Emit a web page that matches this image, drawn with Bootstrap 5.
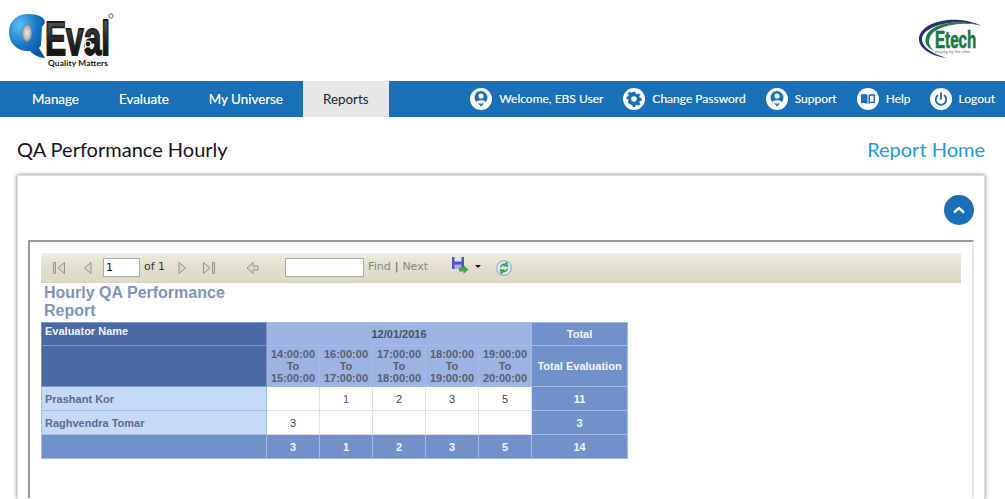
<!DOCTYPE html>
<html lang="en">
<head>
<meta charset="utf-8">
<title>QA Performance Hourly</title>
<link href="https://cdn.jsdelivr.net/npm/bootstrap@5.3.0/dist/css/bootstrap.min.css" rel="stylesheet">
<style>
html,body{height:499px;overflow:hidden;background:#fff}
body{font-family:Lato,"Liberation Sans",sans-serif;color:#111}
.brand-row{height:81px}
.qlogo{display:block;width:125px;height:81px}
.etech{display:block;width:90px;height:81px}
.main-bar{height:36px;background:#1a6fb9;padding:0 10px 0 12px}
.tab-link{display:block;height:36px;line-height:36px;padding:0 20px;color:#eef4fa;font-size:13.4px;text-shadow:0 0 .6px #eef4fa;text-decoration:none}
.tab-link.current{background:#e7e7e7;color:#1b1b3a;text-shadow:none}
.util-link{display:flex;align-items:center;gap:7px;margin-left:20px;color:#e6eff8;font-size:12px;text-shadow:0 0 .6px #e6eff8;text-decoration:none;white-space:nowrap}
.util-link svg{display:block;width:22px;height:22px;flex:none}
.util-link.tight{margin-left:19px}
.page-head{height:58px;padding:0 20px 0 17px}
.page-title{font-size:20px;font-weight:400;color:#15151f;margin:0;position:relative;top:3px}
.home-link{font-size:20px;color:#1c9be0;text-decoration:none;position:relative;top:3px}
.outer-panel{margin:0 20px 0 17px;height:324px;background:#fff;border:1px solid #ddd;border-bottom:0;box-shadow:0 0 4px rgba(0,0,0,.55);padding:19px 10px 0 10px}
.round-up{width:30px;height:30px;padding:0;border:0;border-radius:50%;background:#1a6fb9;display:flex;align-items:center;justify-content:center}
.round-up svg{width:14px;height:10px;display:block}
.viewer{margin-top:15px;height:258px;border-top:2px solid #999;border-left:2px solid #999;border-right:2px solid #e8e8e8;padding:11px 11px 0 11px}
.tool-strip{height:30px;background:linear-gradient(#f0ede0 0,#e5e1d1 40%,#e0dccb 70%,#ddd9c7 100%);border-bottom:1px solid #d8d4c2;font-family:"DejaVu Sans",sans-serif;font-size:11px;color:#333;padding-left:11px}
.tool-strip svg{display:block;flex:none}
.pg-input{width:37px;height:19px;border:1px solid #aaa;background:#fff;font-size:11px;line-height:17px;padding:0 2px;color:#111}
.find-input{width:79px;height:19px;border:1px solid #aaa;background:#fff}
.find-txt{color:#7c8b8b}
.find-sep{color:#51615c;margin:0 4px}
.rep-title{width:215px;margin:1px 0 2px 3px;font-family:"Liberation Sans",sans-serif;font-size:16px;line-height:18px;font-weight:700;color:#7f93c0}
.rep-grid{table-layout:fixed;width:586px;border-collapse:collapse;font-family:"Liberation Sans",sans-serif;font-size:11px;line-height:12px;font-weight:700}
.rep-grid td{border:1px solid #a4bce4;text-align:center;padding:0;vertical-align:middle;height:24px}
.rep-grid tr.top-row td{height:23px}
.c-name{width:225px}.c-hr{width:53px}.c-tot{width:96px}
.rep-grid td.evalh{background:#4a68a2;color:#f2f5fb;text-align:left;vertical-align:top;padding:2px 3px;border-color:#7a97cf}
.rep-grid td.dateh{background:#9db4e2;color:#4a5160}
.rep-grid td.hrh{background:#9db4e2;color:#59606e;height:41px}
.rep-grid td.toth{background:#7091c9;color:#f5f7fb}
.rep-grid td.pname{background:#c6d9f6;color:#5b6a97;text-align:left;padding-left:3px}
.rep-grid td.val{background:#fff;color:#444;font-weight:400;border-color:#e2e2e2}
.rep-grid td.val.link{color:#7a3a8a}
</style>
</head>
<body>
<header class="brand-row d-flex justify-content-between">
  <svg class="qlogo" viewBox="0 0 125 81" role="img" aria-label="Q-Eval logo">
    <defs>
      <radialGradient id="blueg" cx="30%" cy="25%" r="85%"><stop offset="0" stop-color="#5cc0f4"/><stop offset=".55" stop-color="#1577c9"/><stop offset="1" stop-color="#0b4f9e"/></radialGradient>
      <linearGradient id="blk" x1="0" y1="0" x2="0" y2="1"><stop offset="0" stop-color="#666"/><stop offset=".5" stop-color="#2a2a2a"/><stop offset="1" stop-color="#000"/></linearGradient>
      <radialGradient id="holeg" cx="50%" cy="50%" r="55%"><stop offset="0" stop-color="#e8e8e8"/><stop offset=".6" stop-color="#bdbdbd"/><stop offset="1" stop-color="#5a6f80"/></radialGradient>
    </defs>
    <path d="M28 14c10 0 17 3 17 9l-3 4-1 18-2 3 6 10c-6 0-11-3-15-7C18 52 9 44 9 32c0-11 8-18 19-18z" fill="url(#blueg)"/>
    <ellipse cx="27" cy="33" rx="5" ry="9" fill="url(#holeg)"/>
    <text transform="translate(45 55) scale(.66 1)" font-family="'Liberation Sans',sans-serif" font-weight="700" font-size="48" fill="url(#blk)" stroke="#1c1c1c" stroke-width="1.800">Eval</text>
    <circle cx="88" cy="44" r="3" fill="none" stroke="#fff" stroke-width="1.200"/><path d="M86 46.500l-4.500 5" stroke="#fff" stroke-width="1.600"/>
    <circle cx="111" cy="16" r="2.200" fill="none" stroke="#555" stroke-width=".9"/>
    <text x="48" y="66" font-family="Lato,sans-serif" font-weight="700" font-size="8.300" fill="#111" textLength="60">Quality Matters</text>
  </svg>
  <svg class="etech" viewBox="915 0 90 81" role="img" aria-label="Etech logo">
    <path d="M982 26C958 14 922 20 919 38c-1 10 12 18 28 20C933 54 921 47 922 38 925 24 958 18 982 26z" fill="#2a2f73"/>
    <path d="M980 25C958 19 930 23 926 37c-2 7 2 11 8 14C929 46 928 42 930 37 934 27 958 21 980 25z" fill="#1e7d45"/>
    <text transform="translate(935 48) scale(.66 1)" font-family="'Liberation Sans',sans-serif" font-weight="700" font-size="23" fill="#167a3e" stroke="#167a3e" stroke-width=".7">Etech</text>
    <text x="935" y="53" font-family="'Liberation Sans',sans-serif" font-size="3.600" fill="#555" textLength="35">playing by the rules</text>
  </svg>
</header>

<nav class="main-bar d-flex justify-content-between align-items-center">
  <div class="d-flex">
    <a class="tab-link" href="#">Manage</a>
    <a class="tab-link" href="#">Evaluate</a>
    <a class="tab-link" href="#">My Universe</a>
    <a class="tab-link current" href="#">Reports</a>
  </div>
  <div class="d-flex">
    <a class="util-link" href="#"><svg viewBox="0 0 22 22"><circle cx="11" cy="11" r="11" fill="#fff"/><circle cx="11" cy="9.500" r="6.500" fill="#1a6fb9"/><circle cx="11" cy="8" r="2.600" fill="#fff"/><path d="M6.500 14c1-2.300 8-2.300 9 0-1.200 1.500-2.800 2.200-4.500 2.200S7.700 15.500 6.500 14z" fill="#fff"/><path d="M8 15.500l3 3 3-3z" fill="#1a6fb9"/></svg>Welcome, EBS User</a>
    <a class="util-link" href="#"><svg viewBox="0 0 22 22"><circle cx="11" cy="11" r="11" fill="#fff"/><path d="M9.600 4h2.800l.4 2 1.400.6 1.800-1.100 2 2-1.100 1.800.6 1.400 2 .4v2.800l-2 .4-.6 1.400 1.100 1.800-2 2-1.800-1.100-1.400.6-.4 2H9.600l-.4-2-1.400-.6L6 17.500l-2-2 1.100-1.800-.6-1.400-2-.4V9.500l2-.4.6-1.400L4 5.900l2-2 1.800 1.100 1.400-.6z" transform="translate(1.100 .2) scale(.9)" fill="#1a6fb9"/><circle cx="11" cy="11" r="2.800" fill="#fff"/></svg>Change Password</a>
    <a class="util-link" href="#"><svg viewBox="0 0 22 22"><circle cx="11" cy="11" r="11" fill="#fff"/><circle cx="11" cy="9.500" r="6.500" fill="#1a6fb9"/><circle cx="11" cy="8" r="2.600" fill="#fff"/><path d="M6.500 14c1-2.300 8-2.300 9 0-1.200 1.500-2.800 2.200-4.500 2.200S7.700 15.500 6.500 14z" fill="#fff"/><path d="M8 15.500l3 3 3-3z" fill="#1a6fb9"/></svg>Support</a>
    <a class="util-link" href="#"><svg viewBox="0 0 22 22"><circle cx="11" cy="11" r="11" fill="#fff"/><path d="M4 6.500c2.500-.8 5-.8 6.500.5v9c-1.500-1-4-1.200-6.500-.5zM18 6.500c-2.500-.8-5-.8-6.500.5v9c1.500-1 4-1.200 6.500-.5z" fill="#1a6fb9"/><path d="M13 8.200c1-.5 2.200-.6 3.500-.4v6c-1.300-.2-2.500-.1-3.500.3z" fill="#fff"/></svg>Help</a>
    <a class="util-link tight" href="#"><svg viewBox="0 0 22 22"><circle cx="11" cy="11" r="11" fill="#fff"/><path d="M7.500 7.500a5.300 5.300 0 1 0 7 0" fill="none" stroke="#1a6fb9" stroke-width="1.800" stroke-linecap="round"/><path d="M11 5v6" stroke="#1a6fb9" stroke-width="1.800" stroke-linecap="round"/></svg>Logout</a>
  </div>
</nav>

<div class="page-head d-flex justify-content-between align-items-center">
  <h1 class="page-title">QA Performance Hourly</h1>
  <a class="home-link" href="#">Report Home</a>
</div>

<section class="outer-panel">
  <div class="d-flex justify-content-end">
    <button class="round-up" type="button" aria-label="Collapse"><svg viewBox="0 0 14 10"><path d="M2 7.500l5-4.500 5 4.500" fill="none" stroke="#fff" stroke-width="2.400"/></svg></button>
  </div>
  <div class="viewer">
    <div class="tool-strip d-flex align-items-center">
      <svg width="14" height="14" viewBox="0 0 14 14"><path d="M1.500 1.500v11h2v-11zM12.500 1.500v11L6 7z" fill="#dcd9cb" stroke="#8f9496"/></svg>
      <svg width="9" height="14" viewBox="0 0 9 14" style="margin-left:17px"><path d="M8 1.500v11L1.500 7z" fill="#dcd9cb" stroke="#8f9496"/></svg>
      <div class="pg-input" style="margin-left:11px">1</div>
      <span style="margin-left:4px">of 1</span>
      <svg width="9" height="14" viewBox="0 0 9 14" style="margin-left:13px"><path d="M1 1.500v11L7.500 7z" fill="#dcd9cb" stroke="#8f9496"/></svg>
      <svg width="14" height="14" viewBox="0 0 14 14" style="margin-left:15px"><path d="M1.500 1.500v11L8 7zM10.500 1.500v11h2v-11z" fill="#dcd9cb" stroke="#8f9496"/></svg>
      <svg width="13" height="14" viewBox="0 0 13 14" style="margin-left:30px"><path d="M1 7l6-5.500V5h5v4H7v3.500z" fill="#dcd9cb" stroke="#8f9496"/></svg>
      <div class="find-input" style="margin-left:26px"></div>
      <span class="find-txt" style="margin-left:4px">Find</span><span class="find-sep">|</span><span class="find-txt">Next</span>
      <svg width="18" height="17" viewBox="0 0 18 17" style="margin:-4px 0 0 23px"><rect x="1" y="0" width="12" height="12" fill="#4f55bd"/><rect x="3.500" y="0" width="7" height="4.500" fill="#dfe3f5"/><rect x="3.500" y="7.500" width="7" height="4.500" fill="#a9aee6"/><path d="M8 10.500h4.500V8l5 4.500-5 4.500v-2.500H8z" fill="#4aa63c"/></svg>
      <svg width="6" height="3" viewBox="0 0 6 3" style="margin-left:6px;margin-top:-3px"><path d="M0 0h6L3 3z" fill="#111"/></svg>
      <svg width="16" height="16" viewBox="0 0 16 16" style="margin-left:15px"><circle cx="8" cy="8" r="7.300" fill="#dbe8f7" stroke="#7ba4d9"/><path d="M4.500 7.500A3.800 3.800 0 0 1 9 4.300L8 5.700l3.500.3-1-3.300-.9 1" fill="none" stroke="#2f9a2f" stroke-width="1.300"/><path d="M11.500 8.500A3.800 3.800 0 0 1 7 11.700l1-1.400-3.500-.3 1 3.300.9-1" fill="none" stroke="#2f9a2f" stroke-width="1.300"/></svg>
    </div>
    <div class="rep-title">Hourly QA Performance Report</div>
    <table class="rep-grid">
      <colgroup><col class="c-name"><col class="c-hr"><col class="c-hr"><col class="c-hr"><col class="c-hr"><col class="c-hr"><col class="c-tot"></colgroup>
      <tbody>
        <tr class="top-row"><td class="evalh">Evaluator Name</td><td class="dateh" colspan="5">12/01/2016</td><td class="toth">Total</td></tr>
        <tr><td class="evalh"></td><td class="hrh">14:00:00<br>To<br>15:00:00</td><td class="hrh">16:00:00<br>To<br>17:00:00</td><td class="hrh">17:00:00<br>To<br>18:00:00</td><td class="hrh">18:00:00<br>To<br>19:00:00</td><td class="hrh">19:00:00<br>To<br>20:00:00</td><td class="toth">Total Evaluation</td></tr>
        <tr><td class="pname">Prashant Kor</td><td class="val"></td><td class="val link">1</td><td class="val">2</td><td class="val">3</td><td class="val">5</td><td class="toth">11</td></tr>
        <tr><td class="pname">Raghvendra Tomar</td><td class="val">3</td><td class="val"></td><td class="val"></td><td class="val"></td><td class="val"></td><td class="toth">3</td></tr>
        <tr><td class="toth"></td><td class="toth">3</td><td class="toth">1</td><td class="toth">2</td><td class="toth">3</td><td class="toth">5</td><td class="toth">14</td></tr>
      </tbody>
    </table>
  </div>
</section>
<script src="https://cdn.jsdelivr.net/npm/bootstrap@5.3.0/dist/js/bootstrap.bundle.min.js"></script>
</body>
</html>
